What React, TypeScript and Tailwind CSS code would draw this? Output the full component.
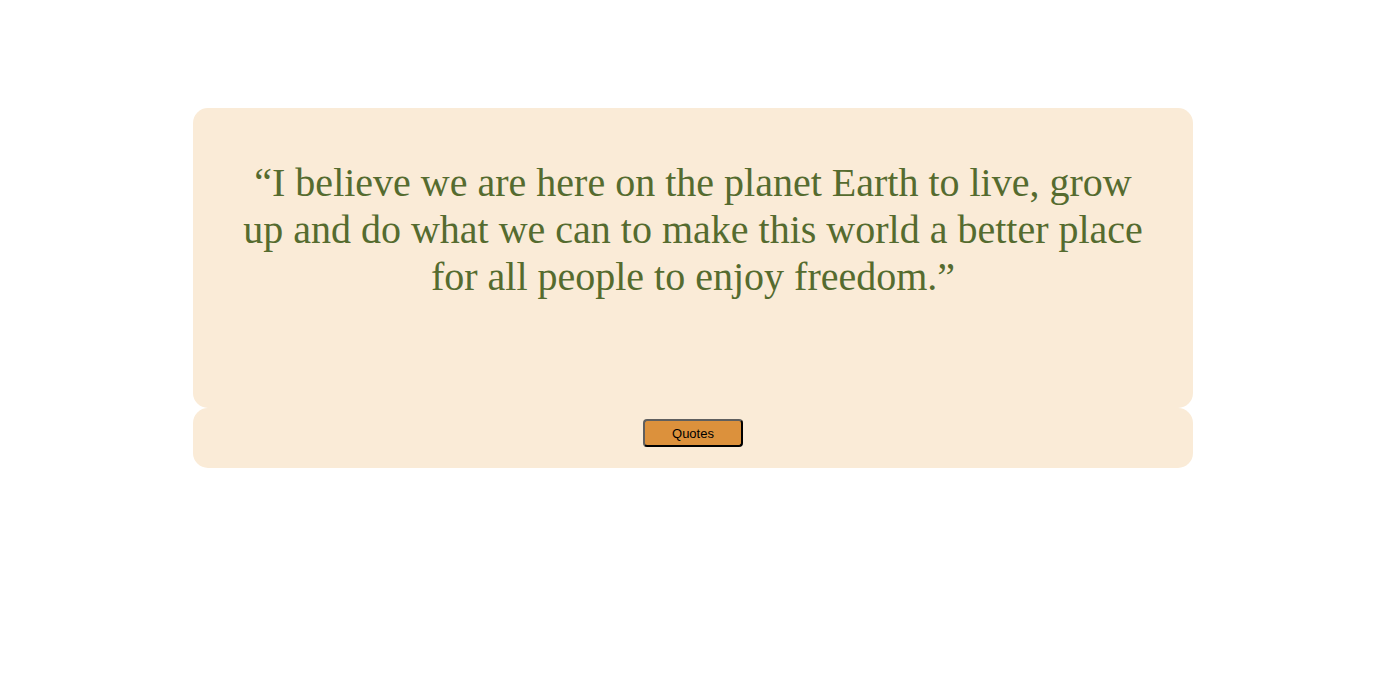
export default function App() {
  return (
    <div className="min-h-[682px] w-full bg-white pr-2 pt-[108px]">
      <div className="mx-auto w-[1000px]">
        <div className="h-[300px] rounded-[15px] bg-[#faebd7] px-10 pt-[51px]">
          <p
            className="text-center text-[40px] leading-[47px] text-[#556b2f]"
            style={{ fontFamily: '"Liberation Serif", "Times New Roman", serif' }}
          >
            “I believe we are here on the planet Earth to live, grow up and do what we can to make this world a better place for all people to enjoy freedom.”
          </p>
        </div>
        <div className="flex h-[60px] justify-center rounded-[15px] bg-[#faebd7] pt-[11px]">
          <button
            className="h-[28px] w-[100px] rounded-[4px] border-2 border-b-black border-l-[#5f5f5f] border-r-black border-t-[#5f5f5f] bg-[#dc913c] pt-px text-[13px] text-black"
            style={{ fontFamily: '"Liberation Sans", Arial, sans-serif' }}
          >
            Quotes
          </button>
        </div>
      </div>
    </div>
  );
}
